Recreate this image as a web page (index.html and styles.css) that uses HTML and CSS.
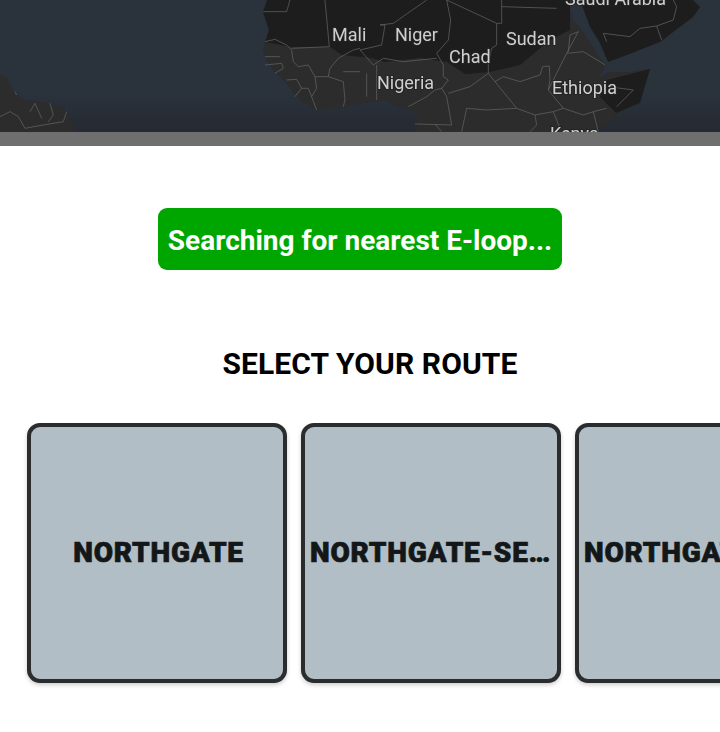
FILE: index.html
```html
<!doctype html>
<html>
<head>
    <meta charset="utf-8">
    <title>Select your route</title>
    <link rel="stylesheet" href="styles.css">
</head>

<body>
<div class="map">
    <svg class="map_svg" width="720" height="132" viewBox="0 0 720 132">
        <!--land-->
        <path class="land" d="M0 75L7 78L13 90L23 100L43 102L63 108L72 120L75 132L0 132Z"/>
        <path class="land" d="M267 0L263 12L269 30L265 42L263 50L266 60L275 72L285 82L295 95L310 107L318 110L340 108L360 104L385 100L400 108L415 112L418 125L414 132L594 132L607 123L625 110L640 90L647 80L650 69L627 72L608 72L600 78L605 65L595 50L585 34L573 20L570 8L570 0Z"/>
        <path class="land_dark" d="M267 0L263 12L269 30L265 42L291 47L330 47L342 55L372 58L385 62L420 58L447 62L465 74L490 72L520 65L550 40L570 30L570 0Z"/>
        <path class="land_dark" d="M607 80L650 69L640 103L616 113L600 97Z"/>
        <path class="land_dark" d="M580 0L590 27L600 43L608 62L627 55L660 42L693 17L700 7L693 0Z"/>

        <!--west africa borders-->
        <g transform="scale(.3333)">
            <path class="border" d="M790 35L860 35L870 0M975 0L988 140L875 145M795 125L825 118L860 135L875 150L880 185L895 200L925 195L945 230L985 230L1030 245L1035 300L1030 320M945 230L950 265L935 290L950 330M985 230L990 205L1015 175L1060 150L1080 145M1030 215L1080 215M795 170L840 170M795 195L845 190L850 205L825 220M860 240L890 238L905 265L885 290M905 265L925 265L935 290"/>
            <path class="border" d="M0 350L30 335L55 350L75 385L130 375L190 365L200 335M90 335L105 310L125 355M150 310L160 345L145 365M45 275L50 285"/>
        </g>

        <!--east africa borders-->
        <g transform="translate(360 0) scale(.3333)">
            <path class="border" d="M60 75L100 70L200 0M60 75L75 75L65 135L0 150L40 195L70 175L130 185L230 175M260 0L272 60L265 120L230 160L250 195L250 230L265 240L245 265L260 290L275 375M260 0L410 70L410 135L395 145L385 190L385 220L405 245L470 325L525 345L580 335L610 325L670 345L700 335L740 325M410 70L425 70L425 0M425 20L590 25"/>
            <path class="border" d="M405 245L430 230L480 245L540 225L548 200L568 198L570 240L565 270L610 325M385 220L330 260L265 280M50 195L50 300M20 220L20 290M145 320L200 290L225 270L245 265M275 375L165 372M225 372L245 395M320 325L380 330L470 325M320 325L305 395M525 345L530 375L510 395M580 335L600 385M565 270L590 220L620 160L670 155L720 185L735 195M620 160L655 95L630 105L625 155M745 260L820 270L770 320M700 335L715 395"/>
            <path class="border" d="M730 100L810 110L840 85L890 78L905 120M890 78L940 60L950 20L940 0M730 100L740 125"/>
        </g>

        <!--labels-->
        <text class="map_label" x="332" y="41">Mali</text>
        <text class="map_label" x="395" y="41">Niger</text>
        <text class="map_label" x="449" y="63">Chad</text>
        <text class="map_label" x="506" y="45">Sudan</text>
        <text class="map_label" x="377" y="89">Nigeria</text>
        <text class="map_label" x="552" y="94">Ethiopia</text>
        <text class="map_label" x="565" y="5">Saudi Arabia</text>
        <text class="map_label" x="550" y="140">Kenya</text>
    </svg>
</div>
<div class="map_bar"></div>

<div class="status">
    <div class="status_text">Searching for nearest E-loop...</div>
</div>

<h1 class="title">SELECT YOUR ROUTE</h1>

<ul class="routes">
    <li class="route"><span class="route_name">NORTHGATE</span></li>
    <li class="route"><span class="route_name">NORTHGATE-SENIOR HALL</span></li>
    <li class="route"><span class="route_name">NORTHGATE-SOUTH CAMPUS</span></li>
</ul>
</body>

</html>
```

FILE: styles.css
```css
body,
ul,
h1 {
    margin: 0;
    padding: 0;
}

li {
    list-style: none;
}

html,
body {
    height: 732px;
    overflow: hidden;
}

body {
    background-color: #fff;
    font-family: Roboto, "Liberation Sans", sans-serif;
}

.map {
    height: 132px;
    background: linear-gradient(#2a323c, #2a323c 70%, #262a31);
    overflow: hidden;
}

.map_svg {
    display: block;
    filter: blur(.4px);
}

.land {
    fill: #2c2c2c;
}

.land_dark {
    fill: #1e1d1e;
}

.border {
    fill: none;
    stroke: #636363;
    stroke-width: 2.2;
}

.map_label {
    font-size: 18px;
    fill: #cfcfcf;
    stroke: #242424;
    stroke-width: 2px;
    paint-order: stroke;
}

.map_bar {
    height: 14px;
    background-color: #6f6f6f;
}

.status {
    display: flex;
    justify-content: center;
    margin-top: 62px;
}

.status_text {
    width: 404px;
    height: 62px;
    line-height: 65px;
    text-align: center;
    border-radius: 9px;
    background-color: #00a600;
    color: #fff;
    font-size: 28px;
    font-weight: 700;
    white-space: nowrap;
}

.title {
    margin-top: 76px;
    padding-left: 20px;
    height: 36px;
    line-height: 36px;
    text-align: center;
    color: #000;
    font-size: 30px;
    font-weight: 700;
    letter-spacing: .1px;
}

.routes {
    display: flex;
    gap: 14px;
    margin-top: 41px;
    padding: 0 0 10px 27px;
    overflow: hidden;
}

.route {
    display: flex;
    align-items: center;
    flex: none;
    box-sizing: border-box;
    width: 260px;
    height: 260px;
    padding: 0 2px 2px 5px;
    border: 4px solid #2b2c2e;
    border-radius: 13px;
    background-color: #b2bec5;
    box-shadow: 0 2px 4px rgba(0, 0, 0, .2);
}

.route_name {
    width: 100%;
    overflow: hidden;
    white-space: nowrap;
    text-overflow: ellipsis;
    text-align: center;
    color: #141718;
    font-size: 28px;
    font-weight: 900;
    letter-spacing: .75px;
    -webkit-text-stroke: .7px #141718;
}
```
